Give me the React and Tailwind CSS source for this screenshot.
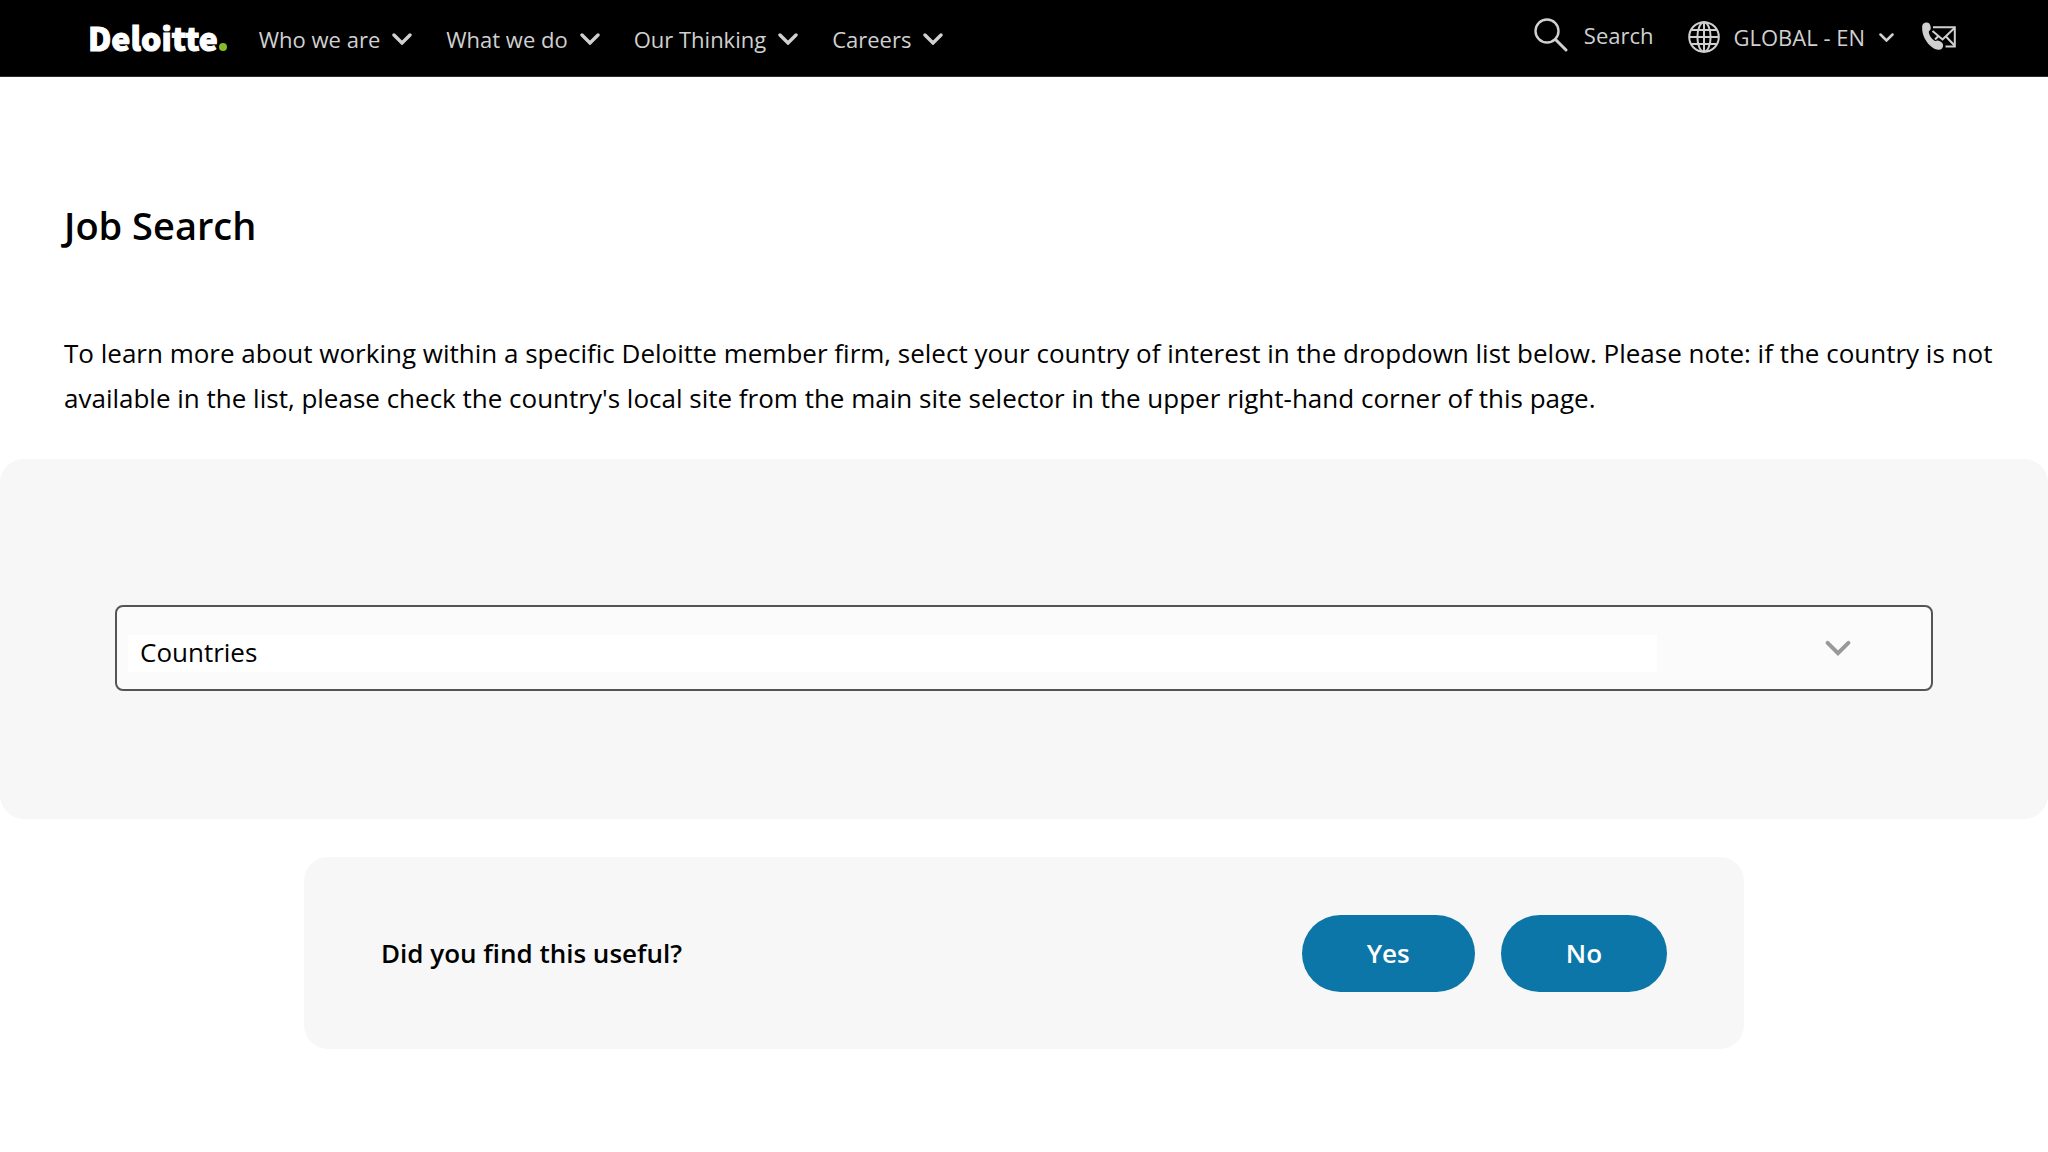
const NAV = ["Who we are", "What we do", "Our Thinking", "Careers"];

function Chevron({ className, strokeWidth }) {
  return (
    <svg viewBox="0 0 20 12" fill="none" stroke="currentColor" strokeWidth={strokeWidth} strokeLinecap="round" className={className} aria-hidden="true">
      <path d="M2 2l8 8 8-8" />
    </svg>
  );
}

function SearchIcon() {
  return (
    <svg viewBox="0 0 34 34" className="h-[34px] w-[34px]" fill="none" stroke="currentColor" strokeWidth="2.4" strokeLinecap="round" aria-hidden="true">
      <circle cx="13" cy="13" r="11.5" />
      <path d="M21.5 21.5L32 32" strokeWidth="3" />
    </svg>
  );
}

function GlobeIcon() {
  return (
    <svg viewBox="0 0 32 32" className="h-8 w-8" fill="none" stroke="currentColor" strokeWidth="2" aria-hidden="true">
      <circle cx="16" cy="16" r="14.8" />
      <ellipse cx="16" cy="16" rx="6.6" ry="14.8" />
      <path d="M16 1v30M1 16h30M3.5 9h25M3.5 23h25" />
    </svg>
  );
}

function ContactIcon() {
  return (
    <svg viewBox="0 0 34 28" className="h-7 w-[34px]" fill="none" stroke="currentColor" strokeWidth="2" aria-hidden="true">
      <path d="M11 5.2H32.8V24.4H23.5" />
      <path d="M10.5 9L20.5 17.5L32.5 6" />
      <path d="M24 14.5L32.5 23.5M16.5 14L13 17.5" />
      <path
        fill="currentColor"
        stroke="none"
        d="M1.2 1.8C3 .2 5.8 0 7 1.2C8.6 3 9 5.5 8.6 7.3C8.3 8.7 6.6 8.7 6.8 10.2C7.3 13.4 9.5 16.6 12.2 18.6C13.8 19.8 14.4 18.4 15.9 18.6C17.8 18.9 20.2 20.3 20.9 22.2C21.5 24.2 20.5 26.8 18.3 27.6C15.5 28.6 11 26.3 8 23.4C3.8 19.3.8 13.6.3 8.4C0 5.6 0 3 1.2 1.8Z"
      />
    </svg>
  );
}

export default function App() {
  return (
    <div className="min-h-screen bg-white font-['Open_Sans',sans-serif] text-black">
      <header className="flex h-[77px] items-center justify-between border-b border-[#2b2b2b] bg-black pr-[92px] pb-0.5 pl-[88px] text-[22px] text-[#d0d0d0]">
        <div className="flex items-center">
          <a
            href="#"
            className="flex items-baseline font-['Noto_Sans_CJK_SC',sans-serif] text-[32px] leading-[44px] font-black text-white [-webkit-text-stroke:1px_white]"
          >
            Deloitte
            <span className="ml-px h-2 w-2 rounded-full bg-[#86bc25]" />
          </a>
          <nav className="ml-8 flex gap-[34px] pt-1">
            {NAV.map((item) => (
              <button key={item} type="button" className="flex items-center gap-3">
                {item}
                <Chevron className="h-3 w-5" strokeWidth="3.4" />
              </button>
            ))}
          </nav>
        </div>
        <div className="flex items-center">
          <button type="button" className="flex items-center gap-4 pb-1">
            <SearchIcon />
            Search
          </button>
          <button type="button" className="ml-[34px] flex items-center gap-3.5">
            <GlobeIcon />
            GLOBAL - EN
            <Chevron className="h-[9px] w-[15px]" strokeWidth="3.4" />
          </button>
          <a href="#" aria-label="Contact us" className="ml-7 pb-0.5">
            <ContactIcon />
          </a>
        </div>
      </header>

      <main>
        <div className="pt-[121px] pr-12 pl-16">
          <h1 className="text-[38px] leading-[54px] font-semibold">Job Search</h1>
          <p className="mt-[79px] text-[26px] leading-[45px]">
            To learn more about working within a specific Deloitte member firm, select your country of interest in the
            dropdown list below. Please note: if the country is not available in the list, please check the country's
            local site from the main site selector in the upper right-hand corner of this page.
          </p>
        </div>

        <section className="mt-[38px] rounded-3xl bg-[#f7f7f7] px-[115px] pt-[146px] pb-32">
          <div className="flex h-[86px] items-center rounded-lg border-2 border-[#555] bg-[#fbfbfb] pr-20 pl-[11px]">
            <select aria-label="Countries" className="mt-[11px] h-[37px] flex-1 appearance-none bg-white pb-1 pl-3 text-[26px] leading-8">
              <option>Countries</option>
            </select>
            <Chevron className="ml-[168px] h-4 w-[26px] text-[#999]" strokeWidth="3" />
          </div>
        </section>

        <section className="mx-auto mt-[38px] flex h-48 w-full max-w-[1440px] items-center justify-between rounded-3xl bg-[#f7f7f7] px-[77px] text-[26px] font-semibold">
          <h2>Did you find this useful?</h2>
          <div className="flex gap-[26px] text-white">
            <button type="button" className="h-[77px] rounded-full bg-[#0d76a8] px-[65px]">Yes</button>
            <button type="button" className="h-[77px] rounded-full bg-[#0d76a8] px-[65px]">No</button>
          </div>
        </section>
      </main>
    </div>
  );
}
